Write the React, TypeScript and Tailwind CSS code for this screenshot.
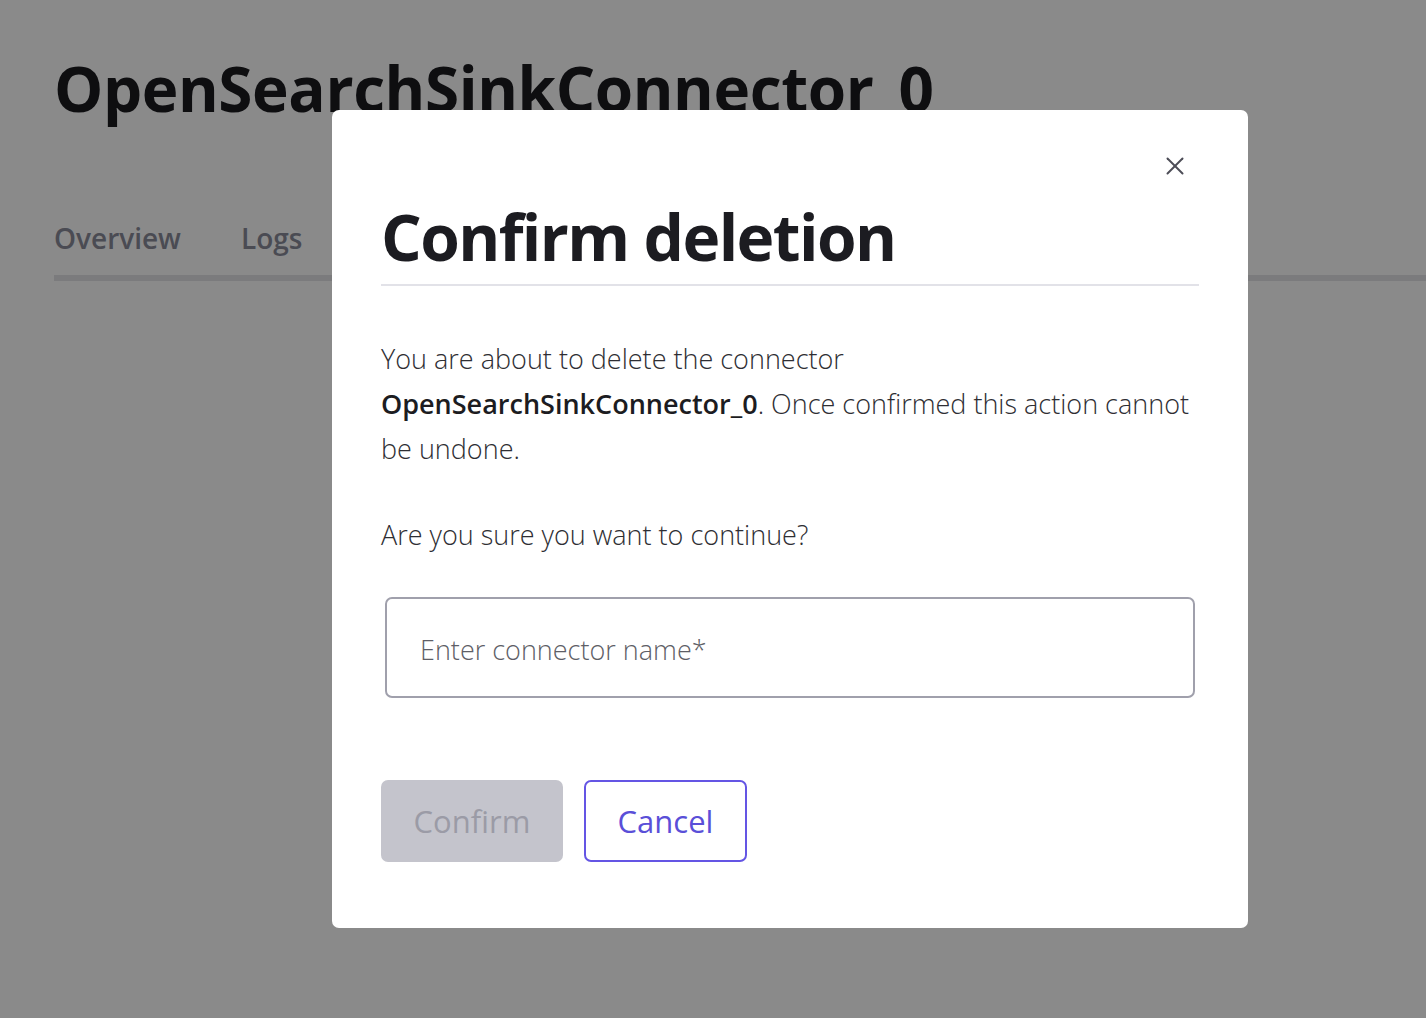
import { X } from 'lucide-react';

const tabs = ['Overview', 'Logs'];

export default function App() {
  return (
    <div className="relative h-[1018px] w-full overflow-hidden bg-white font-['Open_Sans',sans-serif]">
      {/* page behind the modal */}
      <div className="pl-[54px] pt-[44px]">
        <h1 className="text-[62px] font-bold leading-[88px] tracking-[-0.4px] text-[#1a1a1f]">
          OpenSearchSinkConnector_0
        </h1>
        <nav className="mt-[88px] flex gap-[60px] border-b-[6px] border-[#e3e3e8] pb-[19px]">
          {tabs.map((t) => (
            <span key={t} className="text-[28px] font-semibold leading-[36px] text-[#8a8b99]">
              {t}
            </span>
          ))}
        </nav>
      </div>

      {/* overlay */}
      <div className="absolute inset-0 bg-black/[0.46]" />

      {/* modal */}
      <div className="absolute left-[332px] top-[110px] flex h-[818px] w-[916px] flex-col rounded-[7px] bg-white px-[49px] pt-[92px]">
        <button type="button" className="absolute right-[58px] top-[41px] text-[#4d4d57]">
          <X size={30} strokeWidth={1.6} />
        </button>
        <h2 className="border-b-2 border-[#e2e2e8] pb-[12px] text-[64px] font-bold leading-[70px] tracking-[-1.6px] text-[#1c1c21]">
          Confirm deletion
        </h2>
        <div className="mt-[50px] text-[27px] font-light leading-[45px] text-[#2e2e33]">
          <p>
            You are about to delete the connector{' '}
            <b className="font-semibold text-[#1c1c21]">OpenSearchSinkConnector_0</b>. Once
            confirmed this action cannot be undone.
          </p>
          <p className="mt-[41px]">Are you sure you want to continue?</p>
        </div>
        <div className="mx-[4px] mt-[40px] flex h-[101px] items-center rounded-[7px] border-2 border-[#a0a0ac] px-[33px] pt-[6px]">
          <span className="text-[27px] font-light text-[#5e5e66]">Enter connector name*</span>
        </div>
        <div className="mt-[82px] flex gap-[21px]">
          <button
            type="button"
            className="h-[82px] w-[182px] rounded-[7px] bg-[#c4c4cc] text-[31px] text-[#9b9ba6]"
          >
            Confirm
          </button>
          <button
            type="button"
            className="h-[82px] w-[163px] rounded-[7px] border-2 border-[#6455e4] text-[31px] text-[#5a4fd8]"
          >
            Cancel
          </button>
        </div>
      </div>
    </div>
  );
}
